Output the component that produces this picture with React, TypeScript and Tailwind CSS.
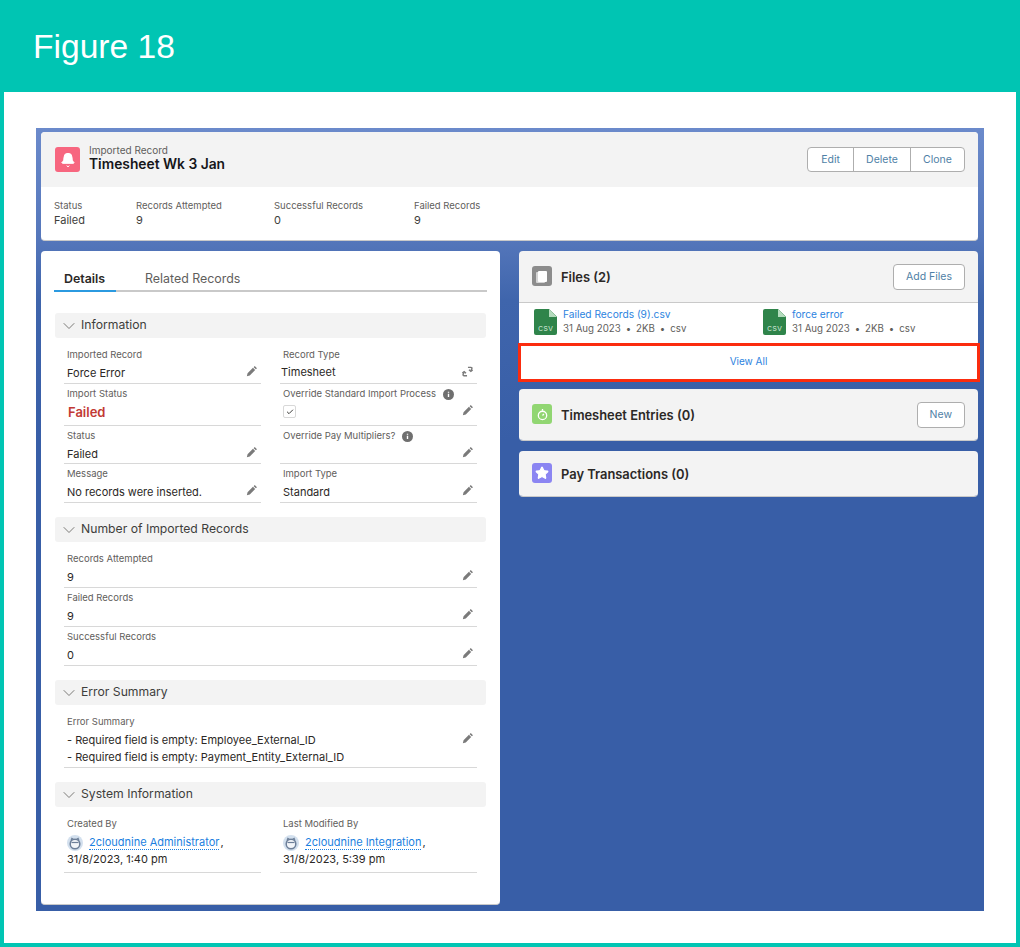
import { Bell, ChevronDown, Star, Check } from "lucide-react";
import type { ReactNode } from "react";

const ui = "font-['Inter',sans-serif]";

const PencilIcon = () => (
  <svg viewBox="0 0 14 14" className="w-[12px] h-[12px] text-[#7a7a7a]" fill="currentColor">
    <path d="M10.2 1.2l2.6 2.6-1.3 1.3-2.6-2.6zM8.1 3.3l2.6 2.6-6.3 6.3-3.4.8.8-3.4z" />
  </svg>
);

const SwapIcon = () => (
  <svg viewBox="0 0 14 14" className="w-[13px] h-[13px] text-[#7a7a7a]" fill="none" stroke="currentColor" strokeWidth="1.5">
    <path d="M7.5 2.5h3.2c.9 0 1.3.7 1 1.4l-1 2.4" />
    <path d="M8.6 5l2 1.8 2-1.4" />
    <path d="M6.5 11.5H3.3c-.9 0-1.3-.7-1-1.4l1-2.4" />
    <path d="M5.4 9l-2-1.8-2 1.4" />
  </svg>
);

const InfoDot = () => (
  <svg viewBox="0 0 12 12" className="w-[11px] h-[11px]">
    <circle cx="6" cy="6" r="6" fill="#6f6f6f" />
    <path d="M6 5.2v3.6M6 3v1.2" stroke="#fff" strokeWidth="1.5" />
  </svg>
);

const Avatar = () => (
  <svg viewBox="0 0 16 16" className="w-[16px] h-[16px] shrink-0">
    <circle cx="8" cy="8" r="8" fill="#d3e0ee" />
    <circle cx="8" cy="9" r="4.8" fill="#f2f5f9" stroke="#6d7f99" strokeWidth="1.5" />
    <path d="M3.4 5.4L4.6 2.4 7 3.9zM12.6 5.4L11.4 2.4 9 3.9z" fill="#6d7f99" />
    <path d="M4.5 7.5h7" stroke="#6d7f99" strokeWidth="1.2" />
  </svg>
);

const CsvIcon = () => (
  <div className="relative w-[23px] h-[26px] mt-[1px] bg-[#2f844a] rounded-[2px] [clip-path:polygon(0_0,65%_0,100%_30%,100%_100%,0_100%)] shrink-0">
    <div className="absolute top-0 right-0 w-[8px] h-[8px] bg-[#b4dcbd] [clip-path:polygon(0_0,100%_100%,0_100%)]" />
    <span className="absolute bottom-[2px] left-[4px] text-[9px] leading-[10px] text-[#b9dcc3]">csv</span>
  </div>
);

const SectionHead = ({ title }: { title: string }) => (
  <div className="mx-[1px] h-[25px] rounded-[3px] bg-[#f3f3f3] flex items-center pl-[4px] gap-[2px] text-[12.2px] text-[#3e3e3c]">
    <ChevronDown className="w-[20px] h-[20px] text-[#706e6b]" strokeWidth={1.1} />
    {title}
  </div>
);

interface FieldProps {
  label: string;
  children?: ReactNode;
  icon?: ReactNode;
  info?: boolean;
  className?: string;
}

const Field = ({ label, children, icon, info, className }: FieldProps) => (
  <div className={`relative border-b border-[#d8d8d8] px-[3px] pt-[3px] ${className}`}>
    <div className="flex items-center gap-[7px] h-[14px] text-[9.5px] text-[#5f5e5c]">
      {label}
      {info && <InfoDot />}
    </div>
    <div className="mt-[3px] text-[11px] leading-[17px] text-[#2b2826]">{children}</div>
    {icon && <div className="absolute right-[3px] top-[20px]">{icon}</div>}
  </div>
);

const Section = ({ children }: { children: ReactNode }) => (
  <div className="px-[10px]">{children}</div>
);

const CardHead = ({ icon, title, action }: { icon: ReactNode; title: string; action?: string }) => (
  <div className="flex items-center justify-between pl-[13px] pr-[13px] bg-[#f3f3f3] h-full">
    <div className="flex items-center gap-[9px]">
      {icon}
      <span className="mt-[2px] text-[12.9px] font-semibold text-[#2b2826]">{title}</span>
    </div>
    {action && (
      <button className="h-[26px] px-[12px] rounded-[4px] border border-[#aeaeae] bg-white text-[10.5px] text-[#4f7fa6]">
        {action}
      </button>
    )}
  </div>
);

const Stat = ({ label, value, className }: { label: string; value: string; className: string }) => (
  <div className={className}>
    <div className="text-[9.5px] leading-[14px] text-[#5f5e5c]">{label}</div>
    <div className="text-[11px] leading-[15px] text-[#3e3e3c]">{value}</div>
  </div>
);

const FileItem = ({ name }: { name: string }) => (
  <div className="flex gap-[6px]">
    <CsvIcon />
    <div>
      <div className="text-[10.2px] leading-[14px] -mt-[1px] text-[#2b83e0]">{name}</div>
      <div className="flex items-center gap-[5px] text-[9.7px] leading-[15px] text-[#5f5e5c]">
        <span>31 Aug 2023</span>
        <span>•</span>
        <span>2KB</span>
        <span>•</span>
        <span>csv</span>
      </div>
    </div>
  </div>
);

const UserLine = ({ name, date }: { name: string; date: string }) => (
  <>
    <div className="mt-[2px] flex items-center gap-[6px]">
      <Avatar />
      <span className="text-[#1b7fe0] border-b border-dotted border-[#1b7fe0] leading-[14px]">{name}</span>
      <span className="-ml-[5px]">,</span>
    </div>
    <div>{date}</div>
  </>
);

export default function App() {
  return (
    <div className={`w-[1020px] h-[947px] bg-[#00c5b3] flex flex-col ${ui}`}>
      <div className="h-[92px] shrink-0 pl-[33px] pt-[2px] flex items-center font-['Liberation_Sans',sans-serif] text-[33.6px] text-white">
        Figure 18
      </div>
      <div className="flex-1 mx-[4px] mb-[4px] bg-white px-[32px] pt-[36px]">
        <div className="h-[783px] bg-[#385ea7] bg-[linear-gradient(180deg,#6b8acb_0%,#5577bb_14%,#3f65ac_22%,#385ea7_40%)] pt-[4px] pl-[5px] pr-[6px]">
          <div className="h-[109px] rounded-[4px] bg-white overflow-hidden border-b border-[#c9c9c9]">
            <div className="h-[55px] bg-[#f3f3f3] flex items-center justify-between pl-[14px] pr-[13px]">
              <div className="flex items-center gap-[9px]">
                <div className="w-[25px] h-[25px] rounded-[3px] bg-[#f7667f] flex items-center justify-center">
                  <Bell className="w-[16px] h-[16px] text-white fill-white" strokeWidth={1.5} />
                </div>
                <div className="-mt-[2px]">
                  <div className="text-[10px] leading-[11px] text-[#5f5e5c]">Imported Record</div>
                  <div className="text-[13.8px] leading-[17px] font-semibold text-[#16161a]">Timesheet Wk 3 Jan</div>
                </div>
              </div>
              <div className="flex h-[25px] rounded-[4px] border border-[#aeaeae] bg-white text-[10.5px] text-[#4f7fa6]">
                <button className="w-[45px]">Edit</button>
                <button className="w-[58px] border-x border-[#aeaeae]">Delete</button>
                <button className="w-[53px]">Clone</button>
              </div>
            </div>
            <div className="flex pl-[13px] pt-[12px]">
              <Stat label="Status" value="Failed" className="w-[82px]" />
              <Stat label="Records Attempted" value="9" className="w-[138px]" />
              <Stat label="Successful Records" value="0" className="w-[140px]" />
              <Stat label="Failed Records" value="9" className="w-[100px]" />
            </div>
          </div>

          <div className="mt-[10px] flex gap-[19px] items-start">
            <div className="w-[459px] h-[654px] rounded-[4px] bg-white border-b border-[#c9c9c9] px-[13px]">
              <div className="h-[41px] flex items-end border-b-2 border-[#c9c9c9] text-[12.4px]">
                <div className="relative -mb-[2px] w-[62px] h-[22px] pl-[10px] border-b-2 border-[#2b9ae0] font-semibold text-[#2b2826]">
                  Details
                </div>
                <div className="h-[20px] pl-[29px] text-[#5f5e5c]">Related Records</div>
              </div>

              <div className="mt-[21px]">
                <SectionHead title="Information" />
              </div>
              <Section>
                <div className="grid grid-cols-[197px_197px] gap-x-[19px] mt-[7px]">
                  <Field label="Imported Record" icon={<PencilIcon />} className="h-[39px]">Force Error</Field>
                  <Field label="Record Type" icon={<SwapIcon />} className="h-[39px]">
                    <span className="relative -top-[1px] -ml-[2px]">Timesheet</span>
                  </Field>
                  <Field label="Import Status" className="h-[42px]">
                    <span className="ml-[1px] text-[#c23934] text-[13px] font-semibold">Failed</span>
                  </Field>
                  <Field label="Override Standard Import Process" info icon={<PencilIcon />} className="h-[42px]">
                    <span className="mt-[4px] w-[13px] h-[13px] flex items-center justify-center border border-[#d8d8d8] rounded-[2px]">
                      <Check className="w-[8px] h-[8px] text-[#3e3e3c]" strokeWidth={3} />
                    </span>
                  </Field>
                  <Field label="Status" icon={<PencilIcon />} className="h-[38px]">Failed</Field>
                  <Field label="Override Pay Multipliers?" info icon={<PencilIcon />} className="h-[38px]" />
                  <Field label="Message" icon={<PencilIcon />} className="h-[39px]">No records were inserted.</Field>
                  <Field label="Import Type" icon={<PencilIcon />} className="h-[39px]">Standard</Field>
                </div>
              </Section>

              <div className="mt-[14px]">
                <SectionHead title="Number of Imported Records" />
              </div>
              <Section>
                <div className="mt-[7px] flex flex-col">
                  <Field label="Records Attempted" icon={<PencilIcon />} className="h-[39px]">9</Field>
                  <Field label="Failed Records" icon={<PencilIcon />} className="h-[39px]">9</Field>
                  <Field label="Successful Records" icon={<PencilIcon />} className="h-[39px]">0</Field>
                </div>
              </Section>

              <div className="mt-[14px]">
                <SectionHead title="Error Summary" />
              </div>
              <Section>
                <Field label="Error Summary" icon={<PencilIcon />} className="mt-[7px] h-[56px]">
                  <div>- Required field is empty: Employee_External_ID</div>
                  <div>- Required field is empty: Payment_Entity_External_ID</div>
                </Field>
              </Section>

              <div className="mt-[14px]">
                <SectionHead title="System Information" />
              </div>
              <Section>
                <div className="grid grid-cols-[197px_197px] gap-x-[19px] mt-[7px]">
                  <Field label="Created By" className="h-[59px]">
                    <UserLine name="2cloudnine Administrator" date="31/8/2023, 1:40 pm" />
                  </Field>
                  <Field label="Last Modified By" className="h-[59px]">
                    <UserLine name="2cloudnine Integration" date="31/8/2023, 5:39 pm" />
                  </Field>
                </div>
              </Section>
            </div>

            <div className="w-[459px] flex flex-col">
              <div className="rounded-t-[4px] overflow-hidden h-[52px] border-b border-[#c9c9c9]">
                <CardHead
                  title="Files (2)"
                  action="Add Files"
                  icon={
                    <div className="w-[20px] h-[20px] rounded-[3px] bg-[#8c8c8c] flex items-center justify-center">
                      <div className="w-[9px] h-[11px] bg-white rounded-[1px] shadow-[-2px_1px_0_#d4d4d4]" />
                    </div>
                  }
                />
              </div>
              <div className="h-[40px] bg-white grid grid-cols-[229px_1fr] pl-[15px] pt-[5px]">
                <FileItem name="Failed Records (9).csv" />
                <FileItem name="force error" />
              </div>
              <div className="-mx-[1.5px] h-[38.5px] pb-[2px] bg-white border-[3px] border-[#fb2c0e] flex items-center justify-center text-[10px] text-[#2b83e0]">
                View All
              </div>

              <div className="mt-[7.5px] h-[52px] rounded-[4px] overflow-hidden border-b border-[#c9c9c9]">
                <CardHead
                  title="Timesheet Entries (0)"
                  action="New"
                  icon={
                    <div className="w-[20px] h-[20px] rounded-[3px] bg-[#91d672] flex items-center justify-center">
                      <svg viewBox="0 0 14 14" className="w-[13px] h-[13px]" fill="none" stroke="#fff" strokeWidth="1.4">
                        <circle cx="7" cy="8" r="4.5" />
                        <path d="M7 1v2M7 8l1.5-1.5" />
                      </svg>
                    </div>
                  }
                />
              </div>

              <div className="mt-[10px] h-[46px] rounded-[4px] overflow-hidden border-b border-[#c9c9c9]">
                <CardHead
                  title="Pay Transactions (0)"
                  icon={
                    <div className="w-[20px] h-[20px] rounded-[3px] bg-[#8b85f2] flex items-center justify-center">
                      <Star className="w-[14px] h-[14px] text-white fill-white" />
                    </div>
                  }
                />
              </div>
            </div>
          </div>
        </div>
      </div>
    </div>
  );
}
